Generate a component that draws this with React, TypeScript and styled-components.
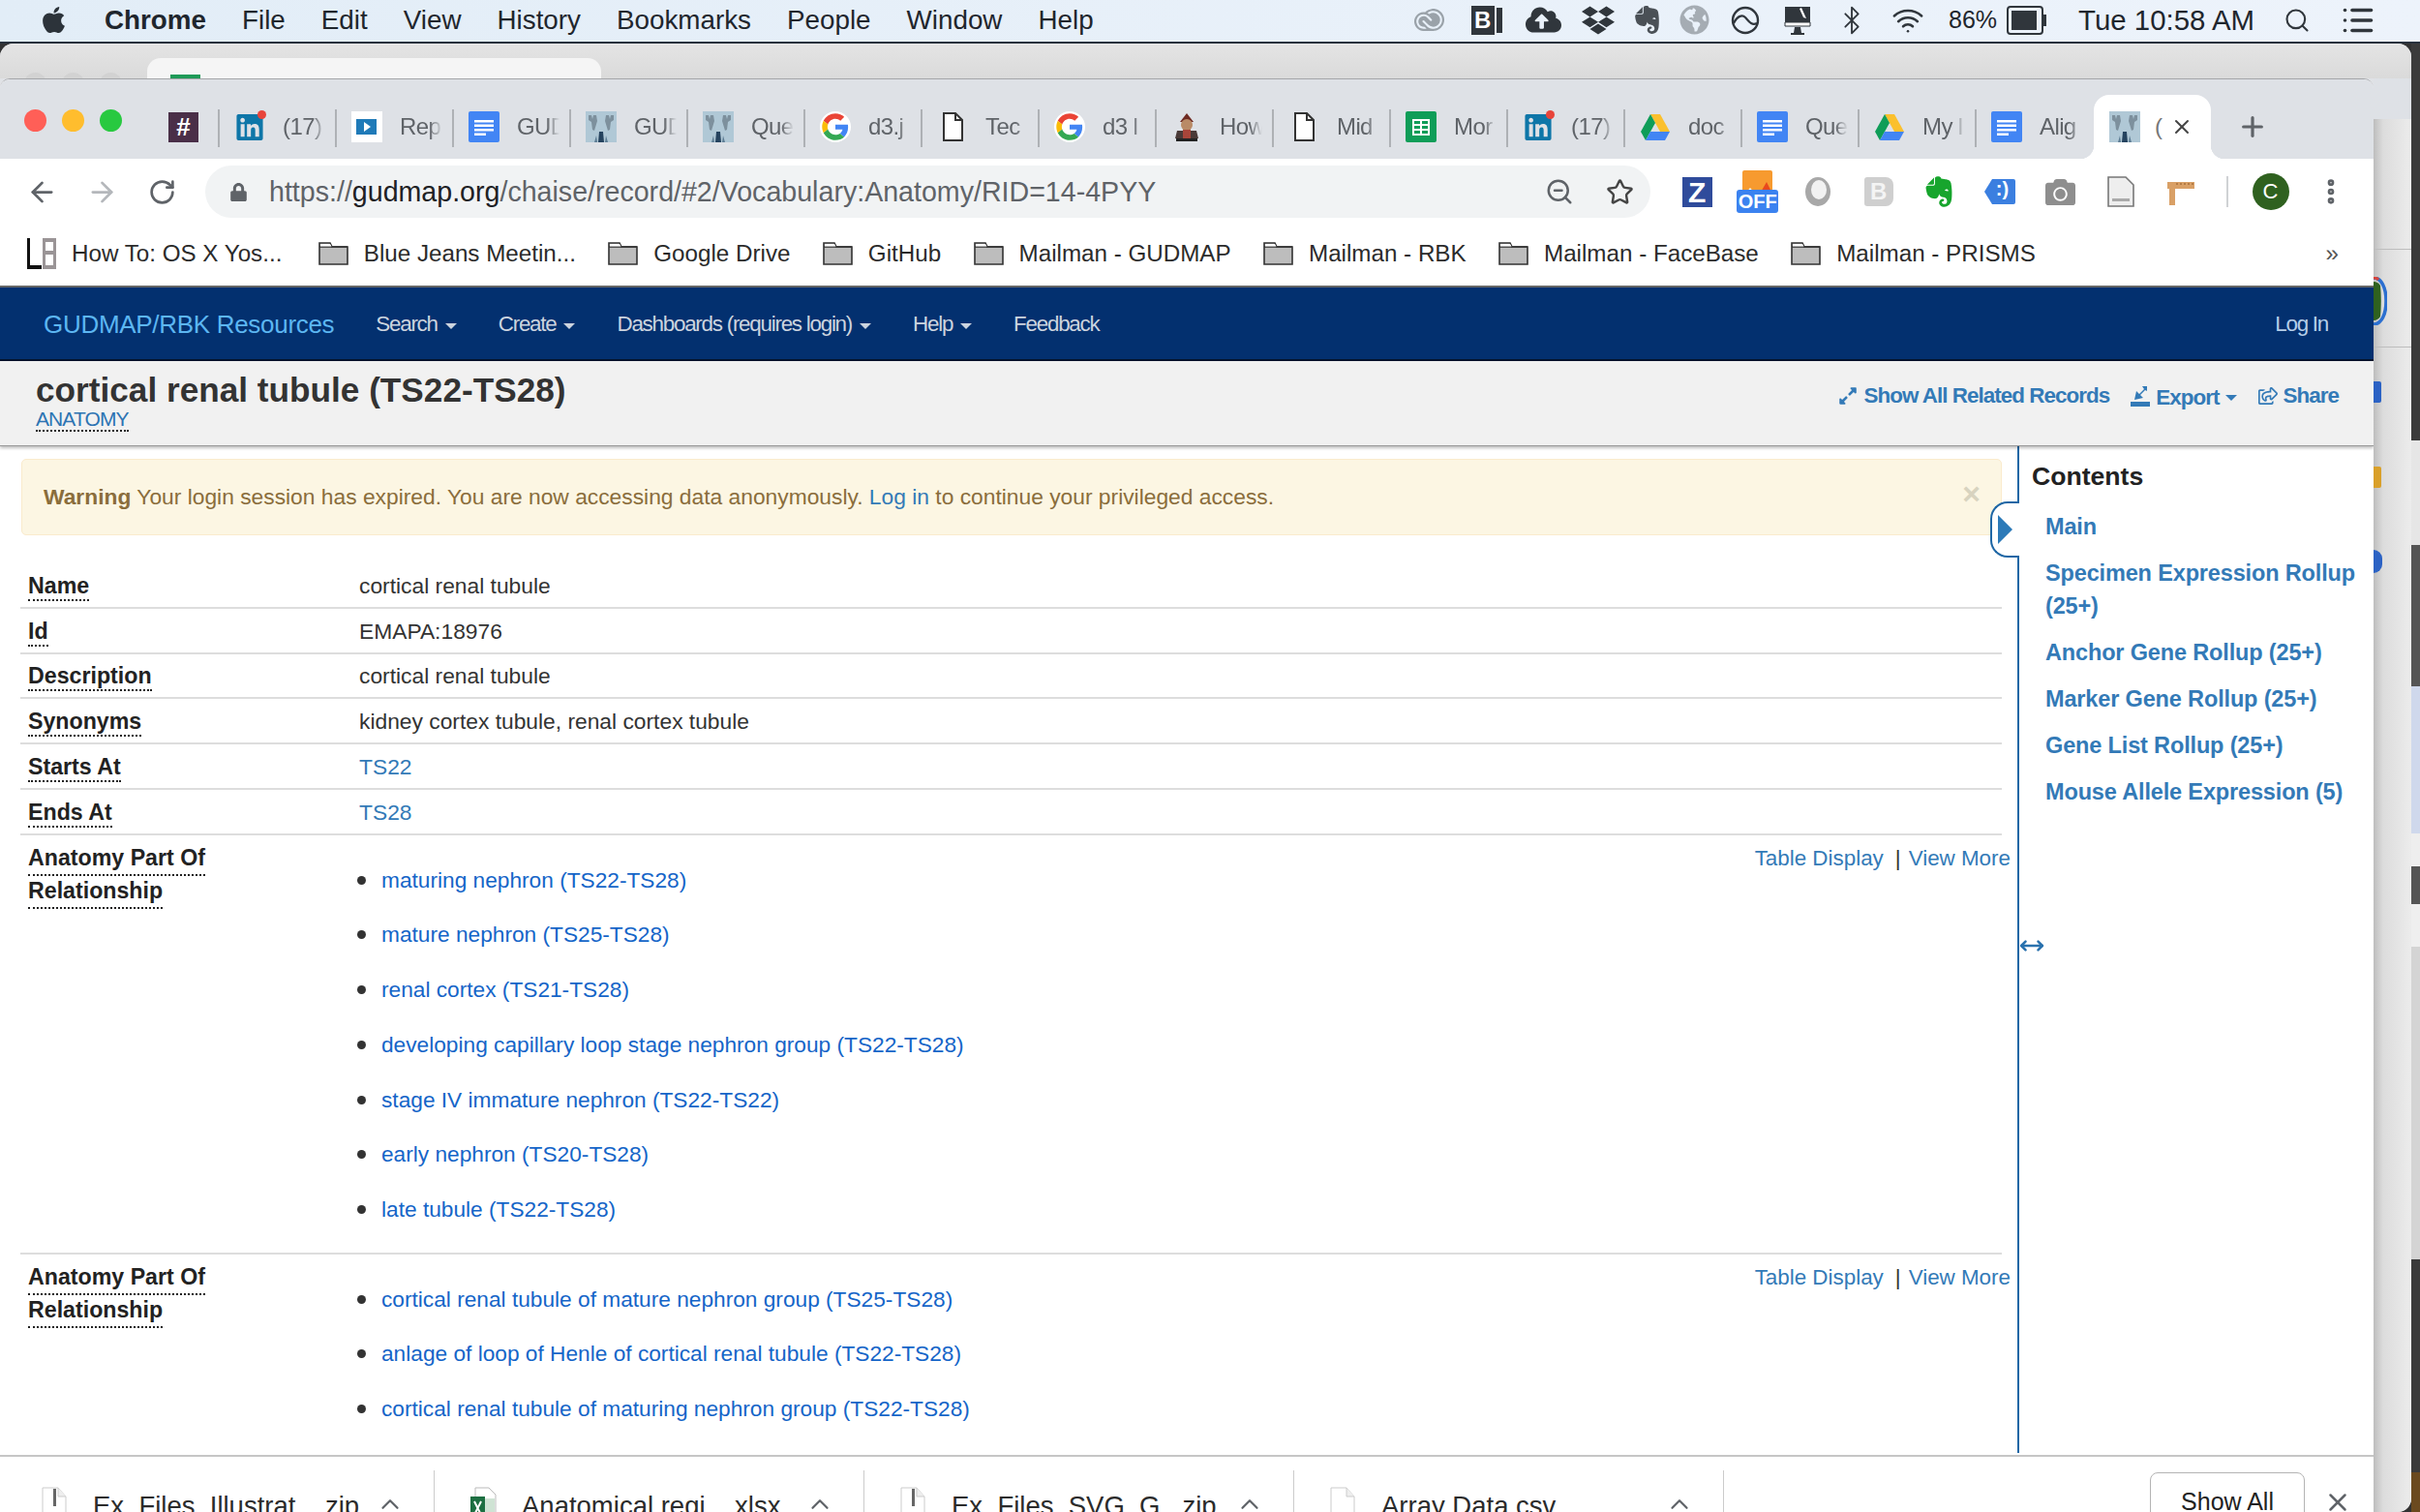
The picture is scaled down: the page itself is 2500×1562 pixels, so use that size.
import React from "react";
import styled, { createGlobalStyle } from "styled-components";
import {
  ArrowLeft,
  ArrowRight,
  Bluetooth,
  ChevronUp,
  EllipsisVertical,
  List,
  MoveHorizontal,
  Plus,
  RotateCw,
  Search,
  Star,
  Wifi,
  X,
  ZoomOut,
} from "lucide-react";
import {
  FaApple,
  FaCamera,
  FaCloudUploadAlt,
  FaDropbox,
  FaEvernote,
  FaExpandAlt,
  FaGlobeAmericas,
  FaLinkedin,
  FaLock,
  FaRegShareSquare,
} from "react-icons/fa";
import { SiAdobecreativecloud } from "react-icons/si";

const GlobalStyle = createGlobalStyle`
  html, body {
    margin: 0;
    padding: 0;
    overflow: hidden;
    background: #333;
  }
  * {
    box-sizing: border-box;
  }
  body {
    font-family: "Liberation Sans", Arial, sans-serif;
  }
`;

const SlackIcon = () => (
  <SlackBox>#</SlackBox>
);

const LinkedInIcon = () => (
  <LinkedInBox>
    <FaLinkedin size={31} color="#0e76a8" />
    <RedDot />
  </LinkedInBox>
);

const RepIcon = () => (
  <svg width="32" height="32" viewBox="0 0 32 32">
    <rect width="32" height="32" fill="#fff" />
    <rect x="5" y="8" width="21" height="16" fill="#1f7ab8" />
    <path d="M13 11l7 5-7 5z" fill="#fff" />
  </svg>
);

const DocsIcon = () => (
  <svg width="32" height="32" viewBox="0 0 32 32">
    <rect width="32" height="32" rx="2" fill="#4285f4" />
    <path d="M6 9h20v2.4H6zM6 13.5h20v2.4H6zM6 18h20v2.4H6zM6 22.5h12v2.4H6z" fill="#fff" />
  </svg>
);

const AnatomyIcon = () => (
  <svg width="32" height="32" viewBox="0 0 32 32">
    <rect width="32" height="32" fill="#b0c8d6" />
    <path d="M3 4h3l1 4 1-4h3l1 6-3 10-2-1-1-8-3-2zM29 4h-3l-1 4-1-4h-3l-1 6 3 10 2-1 1-8 3-2z" fill="#7d909d" />
    <path d="M13 32l1-11h4l1 11z" fill="#25435f" />
    <path d="M9 32l2-7 1 7zM23 32l-2-7-1 7z" fill="#5d7d94" />
  </svg>
);

const GoogleIcon = () => (
  <svg width="32" height="32" viewBox="-4 -4 56 56">
    <circle cx="24" cy="24" r="28" fill="#fff" />
    <path fill="#EA4335" d="M24 9.5c3.54 0 6.71 1.22 9.21 3.6l6.85-6.85C35.9 2.38 30.47 0 24 0 14.62 0 6.51 5.38 2.56 13.22l7.98 6.19C12.43 13.72 17.74 9.5 24 9.5z" />
    <path fill="#4285F4" d="M46.98 24.55c0-1.57-.15-3.09-.38-4.55H24v9.02h12.94c-.58 2.96-2.26 5.48-4.78 7.18l7.73 6c4.51-4.18 7.09-10.36 7.09-17.65z" />
    <path fill="#FBBC05" d="M10.53 28.59c-.48-1.45-.76-2.99-.76-4.59s.27-3.14.76-4.59l-7.98-6.19C.92 16.46 0 20.12 0 24c0 3.88.92 7.54 2.56 10.78l7.97-6.19z" />
    <path fill="#34A853" d="M24 48c6.48 0 11.93-2.13 15.89-5.81l-7.73-6c-2.15 1.45-4.92 2.3-8.16 2.3-6.26 0-11.57-4.22-13.47-9.91l-7.98 6.19C6.51 42.62 14.62 48 24 48z" />
  </svg>
);

const PageIcon = () => (
  <svg width="32" height="32" viewBox="0 0 32 32">
    <path d="M7 2h12l7 7v21H7z" fill="#fff" stroke="#333" strokeWidth="2" />
    <path d="M19 2v7h7" fill="none" stroke="#333" strokeWidth="2" />
  </svg>
);

const PirateIcon = () => (
  <svg width="32" height="32" viewBox="0 0 32 32">
    <path d="M9 11l7-9 7 9z" fill="#6e2a22" />
    <circle cx="16" cy="14" r="6" fill="#b98a66" />
    <path d="M6 20h20l2 8H4z" fill="#4a3a38" />
    <path d="M12 19h8v9h-8z" fill="#a8453a" />
    <path d="M5 28h22v3H5z" fill="#222" />
  </svg>
);

const SheetsIcon = () => (
  <svg width="32" height="32" viewBox="0 0 32 32">
    <rect width="32" height="32" rx="2" fill="#0f9d58" />
    <path d="M7 8h18v17H7z" fill="#fff" />
    <path d="M9 10h6v3H9zM17 10h6v3h-6zM9 15h6v3H9zM17 15h6v3h-6zM9 20h6v3H9zM17 20h6v3h-6z" fill="#0f9d58" />
  </svg>
);

const DriveIcon = () => (
  <svg width="32" height="32" viewBox="0 0 32 32">
    <path d="M11 3h10l10 18H21z" fill="#fbc02d" />
    <path d="M11 3l5 9-10 18-5-9z" fill="#0f9d58" />
    <path d="M11 21h20l-5 9H6z" fill="#4285f4" />
  </svg>
);

const tabs = [
  { icon: <LinkedInIcon />, label: "(17)" },
  { icon: <RepIcon />, label: "Rep" },
  { icon: <DocsIcon />, label: "GUD" },
  { icon: <AnatomyIcon />, label: "GUD" },
  { icon: <AnatomyIcon />, label: "Que" },
  { icon: <GoogleIcon />, label: "d3.j" },
  { icon: <PageIcon />, label: "Tec" },
  { icon: <GoogleIcon />, label: "d3 l" },
  { icon: <PirateIcon />, label: "How" },
  { icon: <PageIcon />, label: "Mid" },
  { icon: <SheetsIcon />, label: "Mor" },
  { icon: <LinkedInIcon />, label: "(17)" },
  { icon: <DriveIcon />, label: "doc" },
  { icon: <DocsIcon />, label: "Que" },
  { icon: <DriveIcon />, label: "My l" },
  { icon: <DocsIcon />, label: "Alig" },
];

const bookmarks = [
  "Google Drive",
  "GitHub",
  "Mailman - GUDMAP",
  "Mailman - RBK",
  "Mailman - FaceBase",
  "Mailman - PRISMS",
];

const fields = [
  { name: "Name", value: "cortical renal tubule" },
  { name: "Id", value: "EMAPA:18976" },
  { name: "Description", value: "cortical renal tubule" },
  { name: "Synonyms", value: "kidney cortex tubule, renal cortex tubule" },
  { name: "Starts At", value: "TS22", link: true },
  { name: "Ends At", value: "TS28", link: true },
];

const partOf = [
  "maturing nephron (TS22-TS28)",
  "mature nephron (TS25-TS28)",
  "renal cortex (TS21-TS28)",
  "developing capillary loop stage nephron group (TS22-TS28)",
  "stage IV immature nephron (TS22-TS22)",
  "early nephron (TS20-TS28)",
  "late tubule (TS22-TS28)",
];

const parts = [
  "cortical renal tubule of mature nephron group (TS25-TS28)",
  "anlage of loop of Henle of cortical renal tubule (TS22-TS28)",
  "cortical renal tubule of maturing nephron group (TS22-TS28)",
];

const contents = [
  "Main",
  "Specimen Expression Rollup (25+)",
  "Anchor Gene Rollup (25+)",
  "Marker Gene Rollup (25+)",
  "Gene List Rollup (25+)",
  "Mouse Allele Expression (5)",
];

const FileIcon = ({ excel }: { excel?: boolean }) =>
  excel ? (
    <svg width="28" height="46" viewBox="0 0 28 46">
      <path d="M6 1h14l7 7v36H6z" fill="#fff" stroke="#bbb" />
      <path d="M12 12h14v26H12z" fill="#cfe3d4" />
      <path d="M1 10h15v24H1z" fill="#1d6f42" />
      <path d="M5 15l7 14M12 15L5 29" stroke="#fff" strokeWidth="2" />
    </svg>
  ) : (
    <svg width="28" height="46" viewBox="0 0 28 46">
      <path d="M2 1h16l8 9v34H2z" fill="#fff" stroke="#ccc" />
      <path d="M18 1v9h8" fill="#eee" stroke="#ccc" />
      <path d="M13 2h3v18h-3z" fill="#666" />
    </svg>
  );

const downloads = [
  { name: "Ex_Files_Illustrat....zip" },
  { name: "Anatomical regi....xlsx", excel: true },
  { name: "Ex_Files_SVG_G...zip" },
  { name: "Array Data.csv", blank: true },
];

const FolderIcon = () => (
  <svg width="31" height="24" viewBox="0 0 31 24">
    <path d="M1 1h11l2 4h16v18H1z" fill="#bdbdbd" stroke="#333" strokeWidth="1.6" />
    <path d="M1 5h29" stroke="#333" strokeWidth="1.6" />
    <path d="M2 2h10l1.5 2.5H2z" fill="#fff" />
  </svg>
);

const App = () => {
  return (
    <Screen>
      <GlobalStyle />
      <MenuBar>
        <FaApple size={31} color="#2c333a" />
        <AppName>Chrome</AppName>
        {["File", "Edit", "View", "History", "Bookmarks", "People", "Window", "Help"].map((m) => (
          <MenuItem key={m}>{m}</MenuItem>
        ))}
        <StatusArea>
          <StatusSlot $w={59}><SiAdobecreativecloud size={31} color="#9aa2a9" /></StatusSlot>
          <StatusSlot $w={59}><MeetBadge>B</MeetBadge><MeetNotch /></StatusSlot>
          <StatusSlot $w={59}><FaCloudUploadAlt size={37} color="#30363c" /></StatusSlot>
          <StatusSlot $w={53}><FaDropbox size={34} color="#30363c" /></StatusSlot>
          <StatusSlot $w={48}><FaEvernote size={33} color="#4a5056" /></StatusSlot>
          <StatusSlot $w={51}><FaGlobeAmericas size={31} color="#a5acb3" /></StatusSlot>
          <StatusSlot $w={53}>
            <svg width="30" height="30" viewBox="0 0 30 30">
              <circle cx="15" cy="15" r="13" fill="none" stroke="#30363c" strokeWidth="2.4" />
              <path d="M3 18c4-8 9-9 12-6s6 9 12 6" fill="none" stroke="#30363c" strokeWidth="2.2" />
            </svg>
          </StatusSlot>
          <StatusSlot $w={55}>
            <svg width="32" height="32" viewBox="0 0 32 32">
              <path d="M3 2h26v20H3z" fill="#30363c" />
              <path d="M3 18h26v4H3z" fill="#fff" stroke="#30363c" />
              <path d="M20 3l5 11-3-1-4-9z" fill="#fff" />
              <path d="M13 23h6l1 6h3v2H9v-2h3z" fill="#30363c" />
            </svg>
          </StatusSlot>
          <StatusSlot $w={58}><Bluetooth size={32} color="#30363c" strokeWidth={1.4} /></StatusSlot>
          <StatusSlot $w={57}><Wifi size={34} color="#30363c" strokeWidth={1.8} /></StatusSlot>
          <StatusText $ml={14}>86%</StatusText>
          <BatteryBody><BatteryFill /></BatteryBody>
          <BatteryCap />
          <TimeText>Tue 10:58 AM</TimeText>
          <StatusSlot $w={50} $ml={19}><Search size={28} color="#30363c" strokeWidth={1.8} /></StatusSlot>
          <StatusSlot $w={42} $ml={17}><List size={36} color="#30363c" strokeWidth={2.4} /></StatusSlot>
        </StatusArea>
      </MenuBar>

      <Desktop>
        <BackWindow>
          <BackTop>
            <BackDots>
              <BackDot />
              <BackDot />
              <BackDot />
            </BackDots>
            <BackTab>
              <BackFavicon />
            </BackTab>
          </BackTop>
          <BackRow>
            <FrontWindow>
              <TabStrip>
                <Lights>
                  <Light $color="#ff5f57" />
                  <Light $color="#ffbd2e" />
                  <Light $color="#28c940" />
                </Lights>
                <PinnedTab>
                  <SlackIcon />
                </PinnedTab>
                {tabs.map((t, i) => (
                  <Tab key={i} $plain={i === tabs.length - 1}>
                    <TabIcon>{t.icon}</TabIcon>
                    <TabLabel>{t.label}</TabLabel>
                  </Tab>
                ))}
                <ActiveTab>
                  <TabIcon>
                    <AnatomyIcon />
                  </TabIcon>
                  <ActiveLabel>(</ActiveLabel>
                  <X size={24} color="#444" strokeWidth={2} />
                </ActiveTab>
                <NewTab>
                  <Plus size={32} color="#5f6368" strokeWidth={2.4} />
                </NewTab>
              </TabStrip>

              <Toolbar>
                <NavSlot><ArrowLeft size={33} color="#5f6368" strokeWidth={2} /></NavSlot>
                <NavSlot><ArrowRight size={33} color="#b4b7bb" strokeWidth={2} /></NavSlot>
                <NavSlot><RotateCw size={29} color="#5f6368" strokeWidth={2.2} /></NavSlot>
                <Omnibox>
                  <FaLock size={19} color="#5f6368" />
                  <UrlText>
                    https://<UrlHost>gudmap.org</UrlHost>/chaise/record/#2/Vocabulary:Anatomy/RID=14-4PYY
                  </UrlText>
                  <OmniIcons>
                    <ZoomOut size={30} color="#5f6368" strokeWidth={2} />
                    <Star size={29} color="#444" strokeWidth={2} />
                  </OmniIcons>
                </Omnibox>
                <Extensions>
                  <ExtSlot><ZoomBox>Z</ZoomBox></ExtSlot>
                  <ExtSlot>
                    <OffStack>
                      <svg width="31" height="24" viewBox="0 0 31 24">
                        <path d="M0 2q0-2 2-2h27q2 0 2 2v22H0z" fill="#f79a2f" />
                        <path d="M18 24l7-12 6 12z" fill="#e8491d" />
                        <path d="M3 24l5-6 5 6z" fill="#fff" />
                      </svg>
                      <OffBadge>OFF</OffBadge>
                    </OffStack>
                  </ExtSlot>
                  <ExtSlot>
                    <svg width="28" height="34" viewBox="0 0 28 34">
                      <ellipse cx="14" cy="17" rx="13" ry="15" fill="#a8a8a8" />
                      <ellipse cx="15" cy="15" rx="8" ry="10" fill="#f2f2f2" />
                    </svg>
                  </ExtSlot>
                  <ExtSlot>
                    <MeetGhost>B</MeetGhost>
                  </ExtSlot>
                  <ExtSlot><FaEvernote size={36} color="#17a52d" /></ExtSlot>
                  <ExtSlot>
                    <TagIcon>
                      <svg width="32" height="30" viewBox="0 0 32 30">
                        <path d="M8 2h22a2 2 0 0 1 2 2v22a2 2 0 0 1-2 2H8l-8-13z" fill="#3b7fe0" />
                      </svg>
                      <TagFace>:)</TagFace>
                    </TagIcon>
                  </ExtSlot>
                  <ExtSlot><FaCamera size={31} color="#8e8e8e" /></ExtSlot>
                  <ExtSlot>
                    <svg width="28" height="32" viewBox="0 0 28 32">
                      <path d="M1 1h18l8 8v22H1z" fill="#eee" stroke="#777" strokeWidth="1.6" />
                      <path d="M5 23h18v3H5z" fill="#aaa" />
                    </svg>
                  </ExtSlot>
                  <ExtSlot>
                    <svg width="28" height="30" viewBox="0 0 28 30">
                      <path d="M0 5h28v7H8v17H2V12H0z" fill="#d9a066" />
                      <path d="M9 7h18" stroke="#a8703c" strokeWidth="1.4" strokeDasharray="2 2" />
                    </svg>
                  </ExtSlot>
                </Extensions>
                <ToolbarDivider />
                <Avatar>C</Avatar>
                <MenuDots><EllipsisVertical size={32} color="#5f6368" strokeWidth={3} /></MenuDots>
              </Toolbar>

              <BookmarkBar>
                <BookmarkFirst>
                  <svg width="30" height="32" viewBox="0 0 30 32">
                    <path d="M0 0h3v28h12v4H0z" fill="#111" />
                    <path d="M16 0h14v32H16zM19 4v9h8V4zM19 17v11h8V17z" fill="#9a9496" />
                  </svg>
                  How To: OS X Yos...
                </BookmarkFirst>
                <Bookmark>
                  <FolderIcon />
                  Blue Jeans Meetin...
                </Bookmark>
                {bookmarks.map((b) => (
                  <Bookmark key={b}>
                    <FolderIcon />
                    {b}
                  </Bookmark>
                ))}
                <BookmarkMore>»</BookmarkMore>
              </BookmarkBar>

              <SiteNav>
                <Brand>GUDMAP/RBK Resources</Brand>
                <NavItem>Search <Caret /></NavItem>
                <NavItem>Create <Caret /></NavItem>
                <NavItem>Dashboards (requires login) <Caret /></NavItem>
                <NavItem>Help <Caret /></NavItem>
                <NavItem>Feedback</NavItem>
                <LogIn>Log In</LogIn>
              </SiteNav>

              <TitleBar>
                <TitleBlock>
                  <Title>cortical renal tubule (TS22-TS28)</Title>
                  <TableName>ANATOMY</TableName>
                </TitleBlock>
                <TitleActions>
                  <ActionLink>
                    <FaExpandAlt size={20} />
                    Show All Related Records
                  </ActionLink>
                  <ActionLink>
                    <svg width="20" height="22" viewBox="0 0 20 22">
                      <path d="M0 17h20v5H0z" fill="#337ab7" />
                      <path d="M12 1h5v5l-2-1-5 5 3 3-9 2 2-9 3 3 5-5z" fill="#337ab7" />
                    </svg>
                    <ExportLabel>Export</ExportLabel> <Caret />
                  </ActionLink>
                  <ActionLink>
                    <FaRegShareSquare size={20} />
                    Share
                  </ActionLink>
                </TitleActions>
              </TitleBar>

              <PageBody>
                <Main>
                  <Alert>
                    <span>
                      <strong>Warning</strong> Your login session has expired. You are now accessing data
                      anonymously. <AlertLink>Log in</AlertLink> to continue your privileged access.
                    </span>
                    <AlertClose>×</AlertClose>
                  </Alert>
                  <RecordTable>
                    {fields.map((f) => (
                      <Row key={f.name}>
                        <FieldLabel><Dotted>{f.name}</Dotted></FieldLabel>
                        {f.link ? <ValueLink>{f.value}</ValueLink> : <Value>{f.value}</Value>}
                      </Row>
                    ))}
                    <ListRow>
                      <LabelStack>
                        <Dotted>Anatomy Part Of</Dotted>
                        <Dotted>Relationship</Dotted>
                      </LabelStack>
                      <RelatedList>
                        {partOf.map((p) => (
                          <RelatedItem key={p}>{p}</RelatedItem>
                        ))}
                      </RelatedList>
                      <RowActions>
                        <RowLink>Table Display</RowLink>
                        <Pipe>|</Pipe>
                        <RowLink>View More</RowLink>
                      </RowActions>
                    </ListRow>
                    <ListRow>
                      <LabelStack>
                        <Dotted>Anatomy Part Of</Dotted>
                        <Dotted>Relationship</Dotted>
                      </LabelStack>
                      <RelatedList>
                        {parts.map((p) => (
                          <RelatedItem key={p}>{p}</RelatedItem>
                        ))}
                      </RelatedList>
                      <RowActions>
                        <RowLink>Table Display</RowLink>
                        <Pipe>|</Pipe>
                        <RowLink>View More</RowLink>
                      </RowActions>
                    </ListRow>
                  </RecordTable>
                  <SideHandle>
                    <HandleArrow />
                  </SideHandle>
                </Main>
                <Side>
                  <SideTitle>Contents</SideTitle>
                  <SideLinks>
                    {contents.map((c) => (
                      <SideLink key={c}>{c}</SideLink>
                    ))}
                  </SideLinks>
                  <ResizeMark>
                    <MoveHorizontal size={26} color="#2a72ae" strokeWidth={2.4} />
                  </ResizeMark>
                </Side>
              </PageBody>

              <DownloadBar>
                {downloads.map((d) => (
                  <DownloadItem key={d.name}>
                    <DownloadIcon>
                      {d.blank ? (
                        <svg width="28" height="46" viewBox="0 0 28 46">
                          <path d="M2 1h16l8 9v34H2z" fill="#fff" stroke="#ccc" />
                          <path d="M18 1v9h8" fill="#eee" stroke="#ccc" />
                        </svg>
                      ) : (
                        <FileIcon excel={d.excel} />
                      )}
                    </DownloadIcon>
                    <DownloadName>{d.name}</DownloadName>
                    <DownloadCaret>
                      <ChevronUp size={30} color="#5f6368" strokeWidth={1.8} />
                    </DownloadCaret>
                  </DownloadItem>
                ))}
                <ShowAll>Show All</ShowAll>
                <DownloadClose>
                  <X size={30} color="#5f6368" strokeWidth={2} />
                </DownloadClose>
              </DownloadBar>
            </FrontWindow>

            <BackEdge>
              <EdgeBand $h={42} $top />
              <EdgeBand $h={135} />
              <EdgeBand $h={101} />
              <EdgeRing>
                <svg width="14" height="50" viewBox="0 0 14 50">
                  <path d="M0 5c3 0 6 2 7 4 1 10 1 22 0 32-1 2-4 4-7 4z" fill="#2f611f" />
                  <path d="M0 1c8 0 13 10 13 24S8 49 0 49" fill="none" stroke="#2b6fd0" strokeWidth="3.5" />
                  <path d="M0 1c2 0 4 .7 5 2" fill="none" stroke="#d9443a" strokeWidth="3" />
                </svg>
              </EdgeRing>
              <EdgeBit $top={313} $color="#2b62c4" $w={8} $h={22} />
              <EdgeBit $top={401} $color="#d9a02a" $w={8} $h={22} />
              <EdgeBit $top={487} $color="#2b62c4" $w={9} $h={24} $round />
            </BackEdge>
          </BackRow>
        </BackWindow>

        <DarkStrip>
          <DarkPart $h={410} $color="#3b3b3b" />
          <DarkPart $h={108} $color="#e6e6e6" />
          <DarkPart $h={146} $color="#555" />
          <DarkPart $h={152} $color="#cfd8ec" />
          <DarkPart $h={34} $color="#eee" />
          <DarkPart $h={39} $color="#555" />
          <DarkPart $h={44} $color="#efefef" />
          <DarkPart $h={323} $color="#d4d4d4" />
          <DarkPart $h={220} $color="#3b3b3b" />
          <DarkPart $h={41} $color="#6b4a1f" />
        </DarkStrip>
      </Desktop>
    </Screen>
  );
};

const Screen = styled.div`
  width: 2500px;
  height: 1562px;
  display: flex;
  flex-direction: column;
  overflow: hidden;
  color: #333;
`;

const MenuBar = styled.div`
  height: 45px;
  flex: none;
  display: flex;
  align-items: center;
  padding: 0 43px 2px 40px;
  gap: 37px;
  background: linear-gradient(90deg, #e2edf7, #edf3fb);
  border-bottom: 2px solid #28313c;
  font-size: 27.8px;
  color: #1f262d;
`;

const AppName = styled.span`
  font-weight: 700;
`;

const MenuItem = styled.span``;

const StatusArea = styled.div`
  margin-left: auto;
  display: flex;
  align-items: center;
`;

const StatusSlot = styled.span<{ $w: number; $ml?: number }>`
  width: ${(p) => p.$w}px;
  margin-left: ${(p) => p.$ml || 0}px;
  display: flex;
  align-items: center;
  justify-content: center;
`;

const StatusText = styled.span<{ $ml: number }>`
  margin-left: ${(p) => p.$ml}px;
  font-size: 25px;
`;

const TimeText = styled(StatusText).attrs({ $ml: 33 })`
  font-size: 29.4px;
  white-space: nowrap;
`;

const MeetBadge = styled.span`
  width: 24px;
  height: 30px;
  background: #30363c;
  color: #fff;
  font-size: 24px;
  font-weight: 700;
  text-align: center;
  line-height: 30px;
`;

const MeetNotch = styled.span`
  width: 6px;
  height: 26px;
  margin-left: 2px;
  background: #30363c;
`;

const BatteryBody = styled.span`
  width: 38px;
  height: 30px;
  margin-left: 10px;
  padding: 3px;
  border: 2px solid #30363c;
  border-radius: 4px;
`;

const BatteryFill = styled.span`
  display: block;
  width: 26px;
  height: 100%;
  background: #30363c;
`;

const BatteryCap = styled.span`
  width: 3px;
  height: 12px;
  background: #30363c;
`;

const Desktop = styled.div`
  flex: 1;
  min-height: 0;
  display: flex;
`;

const BackWindow = styled.div`
  width: 2491px;
  flex: none;
  display: flex;
  flex-direction: column;
  border-radius: 14px 14px 14px 0;
  overflow: hidden;
  background: #e0e2e6;
`;

const BackTop = styled.div`
  height: 36px;
  flex: none;
  display: flex;
  align-items: flex-end;
  overflow: hidden;
  background: linear-gradient(#e4e4e4, #dadada);
`;

const BackDots = styled.div`
  width: 152px;
  flex: none;
  display: flex;
  gap: 16px;
  padding-left: 25px;
  margin-bottom: -17px;
`;

const BackDot = styled.span`
  width: 23px;
  height: 23px;
  border-radius: 50%;
  background: #d2d2d2;
`;

const BackTab = styled.div`
  width: 469px;
  height: 21px;
  border-radius: 14px 14px 0 0;
  background: #f5f5f5;
  display: flex;
  align-items: flex-end;
  padding-left: 24px;
`;

const BackFavicon = styled.span`
  width: 31px;
  height: 4px;
  background: #1e9a57;
`;

const BackRow = styled.div`
  flex: 1;
  min-height: 0;
  display: flex;
`;

const FrontWindow = styled.div`
  width: 2452px;
  flex: none;
  display: flex;
  flex-direction: column;
  background: #fff;
  border-top: 1px solid #a4a6a9;
  border-radius: 10px 10px 0 0;
  overflow: hidden;
`;

const TabStrip = styled.div`
  height: 82px;
  flex: none;
  display: flex;
  align-items: flex-end;
  background: #dee1e6;
`;

const Lights = styled.div`
  width: 153px;
  height: 100%;
  flex: none;
  display: flex;
  gap: 16px;
  padding: 31px 0 0 25px;
`;

const Light = styled.span<{ $color: string }>`
  width: 23px;
  height: 23px;
  border-radius: 50%;
  background: ${(p) => p.$color};
`;

const Tab = styled.div<{ $plain?: boolean }>`
  position: relative;
  width: 121px;
  height: 66px;
  flex: none;
  display: flex;
  align-items: center;
  padding-left: 15px;
  ${(p) =>
    !p.$plain &&
    `&::after {
      content: "";
      position: absolute;
      right: 0;
      top: 15px;
      width: 2px;
      height: 39px;
      background: #aeb1b5;
    }`}
`;

const PinnedTab = styled(Tab)`
  width: 74px;
  padding-left: 21px;
`;

const TabIcon = styled.span`
  width: 32px;
  height: 32px;
  flex: none;
  display: flex;
  align-items: center;
  justify-content: center;
  position: relative;
`;

const TabLabel = styled.span`
  margin-left: 18px;
  width: 44px;
  overflow: hidden;
  white-space: nowrap;
  font-size: 24px;
  letter-spacing: -0.6px;
  color: #5f6368;
  -webkit-mask-image: linear-gradient(90deg, #000 70%, transparent);
  mask-image: linear-gradient(90deg, #000 70%, transparent);
`;

const ActiveTab = styled.div`
  position: relative;
  width: 121px;
  height: 66px;
  flex: none;
  display: flex;
  align-items: center;
  padding-left: 16px;
  background: #fff;
  border-radius: 16px 16px 0 0;

  &::before,
  &::after {
    content: "";
    position: absolute;
    bottom: 0;
    width: 14px;
    height: 14px;
  }
  &::before {
    left: -14px;
    background: radial-gradient(circle at 0 0, #dee1e6 14px, #fff 14.5px);
  }
  &::after {
    right: -14px;
    background: radial-gradient(circle at 100% 0, #dee1e6 14px, #fff 14.5px);
  }
`;

const ActiveLabel = styled.span`
  width: 12px;
  margin: 0 4px 0 15px;
  overflow: hidden;
  font-size: 24px;
  color: #777;
`;

const NewTab = styled.span`
  height: 66px;
  margin-left: 27px;
  display: flex;
  align-items: center;
`;

const SlackBox = styled.span`
  width: 31px;
  height: 31px;
  background: #4a2f48;
  color: #fff;
  font-size: 26px;
  font-weight: 700;
  line-height: 31px;
  text-align: center;
`;

const LinkedInBox = styled.span`
  position: relative;
  width: 28px;
  height: 31px;
  display: flex;
  align-items: center;
  justify-content: center;
`;

const RedDot = styled.span`
  position: absolute;
  top: -2px;
  right: -3px;
  width: 9px;
  height: 9px;
  border-radius: 50%;
  background: #e8443a;
`;

const Toolbar = styled.div`
  height: 68px;
  flex: none;
  display: flex;
  align-items: center;
  padding-left: 12px;
  background: #fff;
`;

const NavSlot = styled.span`
  width: 62px;
  flex: none;
  display: flex;
  justify-content: center;
`;

const Omnibox = styled.div`
  width: 1493px;
  height: 54px;
  margin-left: 14px;
  flex: none;
  display: flex;
  align-items: center;
  padding: 0 17px 0 25px;
  border-radius: 27px;
  background: #f1f3f4;
`;

const UrlText = styled.span`
  margin-left: 22px;
  font-size: 28.6px;
  color: #5f6368;
  white-space: nowrap;
`;

const UrlHost = styled.span`
  color: #202124;
`;

const OmniIcons = styled.span`
  margin-left: auto;
  display: flex;
  align-items: center;
  gap: 33px;
`;

const Extensions = styled.div`
  margin-left: 17px;
  display: flex;
  align-items: center;
`;

const ExtSlot = styled.span`
  width: 62.5px;
  height: 54px;
  flex: none;
  display: flex;
  align-items: center;
  justify-content: center;
`;

const ZoomBox = styled.span`
  width: 31px;
  height: 31px;
  background: #2f4b9b;
  color: #fff;
  font-size: 30px;
  font-weight: 700;
  line-height: 31px;
  text-align: center;
`;

const OffStack = styled.span`
  display: flex;
  flex-direction: column;
  align-items: center;
`;

const OffBadge = styled.span`
  width: 43px;
  height: 24px;
  margin-top: -4px;
  background: #3b82f0;
  border-radius: 3px;
  color: #fff;
  font-size: 20px;
  font-weight: 700;
  line-height: 24px;
  text-align: center;
`;

const MeetGhost = styled.span`
  width: 30px;
  height: 30px;
  background: #cfcfcf;
  border-radius: 3px 8px 8px 3px;
  color: #f4f4f4;
  font-size: 24px;
  font-weight: 700;
  line-height: 30px;
  text-align: center;
`;

const TagIcon = styled.span`
  position: relative;
  display: flex;
`;

const TagFace = styled.span`
  position: absolute;
  left: 12px;
  top: 1px;
  color: #fff;
  font-size: 20px;
  font-weight: 700;
`;

const ToolbarDivider = styled.span`
  width: 2px;
  height: 32px;
  margin-left: 15px;
  background: #d0d2d5;
`;

const Avatar = styled.span`
  width: 38px;
  height: 38px;
  margin-left: 25px;
  border-radius: 50%;
  background: #2f611f;
  color: #fff;
  font-size: 22px;
  line-height: 38px;
  text-align: center;
`;

const MenuDots = styled.span`
  margin-left: 27px;
  display: flex;
`;

const BookmarkBar = styled.div`
  height: 65px;
  flex: none;
  display: flex;
  align-items: center;
  gap: 33.4px;
  padding: 0 0 4px 28px;
  background: #fff;
  border-bottom: 2px solid #666;
  font-size: 24.2px;
  color: #2b2b2b;
`;

const Bookmark = styled.span`
  display: flex;
  align-items: center;
  gap: 16px;
  white-space: nowrap;
`;

const BookmarkFirst = styled(Bookmark)`
  margin-right: 4px;
`;

const BookmarkMore = styled.span`
  margin-left: auto;
  padding-right: 36px;
  color: #555;
`;

const SiteNav = styled.div`
  height: 76px;
  flex: none;
  display: flex;
  align-items: center;
  gap: 43px;
  padding: 2px 47px 0 45px;
  background: #03306f;
  border-bottom: 2px solid #02122c;
  font-size: 22.4px;
  letter-spacing: -1.25px;
  color: #ccd4df;
`;

const Brand = styled.span`
  color: #5cb6f2;
  font-size: 26px;
  letter-spacing: -0.3px;
`;

const NavItem = styled.span`
  display: flex;
  align-items: center;
  gap: 8px;
  white-space: nowrap;
`;

const Caret = styled.span`
  width: 0;
  height: 0;
  margin-top: 3px;
  border-left: 6px solid transparent;
  border-right: 6px solid transparent;
  border-top: 6px solid currentColor;
`;

const LogIn = styled.span`
  margin-left: auto;
  color: #b5cee8;
`;

const TitleBar = styled.div`
  height: 88px;
  flex: none;
  display: flex;
  justify-content: space-between;
  padding: 12px 36px 0 37px;
  background: #f1f1f1;
  border-bottom: 1px solid #999;
  box-shadow: 0 2px 3px rgba(0, 0, 0, 0.25);
  position: relative;
  z-index: 2;
`;

const TitleBlock = styled.div`
  display: flex;
  flex-direction: column;
  align-items: flex-start;
`;

const Title = styled.h1`
  margin: 0;
  font-size: 35.2px;
  line-height: 36px;
  font-weight: 700;
  color: #333;
`;

const TableName = styled.span`
  font-size: 21px;
  line-height: 23px;
  letter-spacing: -0.9px;
  color: #2d74b3;
  border-bottom: 2px dotted #222;
`;

const TitleActions = styled.div`
  display: flex;
  align-items: center;
  gap: 22px;
  height: 48px;
`;

const ActionLink = styled.span`
  display: flex;
  align-items: center;
  gap: 6px;
  font-size: 22.4px;
  font-weight: 700;
  letter-spacing: -0.95px;
  color: #337ab7;
`;

const ExportLabel = styled.span`
  margin-top: 4px;
`;

const PageBody = styled.div`
  flex: 1;
  min-height: 0;
  display: flex;
  overflow: hidden;
`;

const Main = styled.div`
  position: relative;
  width: 2086px;
  flex: none;
  padding: 13px 16px 0 22px;
  border-right: 2px solid #1f67a5;
  background: #fff;
  margin-bottom: 2px;
`;

const Alert = styled.div`
  height: 79px;
  display: flex;
  align-items: center;
  justify-content: space-between;
  padding: 0 22px;
  background: #fcf6e3;
  border: 1px solid #faebcc;
  border-radius: 5px;
  font-size: 22.8px;
  color: #8a6d3b;
`;

const AlertLink = styled.span`
  color: #337ab7;
`;

const AlertClose = styled.span`
  font-size: 32px;
  font-weight: 700;
  color: #d8d3bf;
  margin-top: -6px;
  margin-right: -1px;
`;

const RecordTable = styled.div`
  margin: 29px 0 0 -1px;
`;

const Row = styled.div`
  height: 46.8px;
  display: grid;
  grid-template-columns: 342px 1fr;
  align-items: center;
  padding: 2px 0 0 8px;
  border-bottom: 2px solid #ddd;
  font-size: 22.8px;
`;

const FieldLabel = styled.span``;

const Dotted = styled.span`
  font-size: 23.2px;
  font-weight: 700;
  color: #222;
  border-bottom: 2px dotted #222;
  padding-bottom: 1px;
`;

const Value = styled.span`
  color: #333;
`;

const ValueLink = styled.span`
  color: #337ab7;
`;

const ListRow = styled.div`
  display: grid;
  grid-template-columns: 342px 1fr auto;
  align-items: start;
  padding: 6px 0 0 8px;
  border-bottom: 2px solid #ddd;
  font-size: 22.7px;

  &:last-child {
    border-bottom: none;
  }
`;

const LabelStack = styled.div`
  display: flex;
  flex-direction: column;
  align-items: flex-start;
  line-height: 31px;
  margin-top: 2px;
`;

const RelatedList = styled.ul`
  margin: 12px 0 16px;
  padding: 0 0 0 23px;
  list-style: none;
`;

const RelatedItem = styled.li`
  position: relative;
  height: 56.7px;
  line-height: 56.7px;
  color: #1565c8;

  &::before {
    content: "";
    position: absolute;
    left: -25px;
    top: 24px;
    width: 9px;
    height: 9px;
    border-radius: 50%;
    background: #333;
  }
`;

const RowActions = styled.div`
  display: flex;
  align-items: center;
  font-size: 22.4px;
  line-height: 33px;
  margin: 1px -9px 0 0;
`;

const RowLink = styled.span`
  color: #337ab7;
`;

const Pipe = styled.span`
  margin: 0 8px 0 12px;
`;

const SideHandle = styled.div`
  position: absolute;
  top: 57px;
  right: -2px;
  width: 30px;
  height: 58px;
  display: flex;
  align-items: center;
  padding-left: 6px;
  background: #fff;
  border: 2px solid #1f67a5;
  border-right: none;
  border-radius: 18px 0 0 18px;
`;

const HandleArrow = styled.span`
  width: 0;
  height: 0;
  border-top: 15px solid transparent;
  border-bottom: 15px solid transparent;
  border-left: 15px solid #2c7ab8;
`;

const Side = styled.div`
  position: relative;
  flex: 1;
  padding: 16px 8px 0 13px;
  background: #fff;
`;

const SideTitle = styled.div`
  font-size: 26.6px;
  line-height: 30px;
  font-weight: 700;
  color: #222;
`;

const SideLinks = styled.div`
  margin: 20px 0 0 14px;
  display: flex;
  flex-direction: column;
  gap: 14px;
`;

const SideLink = styled.span`
  font-size: 23.5px;
  line-height: 34px;
  font-weight: 700;
  letter-spacing: -0.15px;
  color: #337ab7;
`;

const ResizeMark = styled.span`
  position: absolute;
  left: 0;
  top: 503px;
  display: flex;
`;

const DownloadBar = styled.div`
  height: 59px;
  flex: none;
  display: flex;
  align-items: flex-start;
  padding-top: 14px;
  overflow: hidden;
  background: #fff;
  border-top: 2px solid #c6c6c6;
`;

const DownloadItem = styled.div`
  width: 444px;
  height: 80px;
  flex: none;
  display: flex;
  align-items: center;
  padding-left: 36px;
  border-right: 1px solid #ccc;
  font-size: 27.5px;
  color: #2b2b2b;

  &:first-child {
    width: 449px;
    padding-left: 42px;
  }
`;

const DownloadIcon = styled.span`
  width: 28px;
  height: 46px;
  flex: none;
  display: flex;
`;

const DownloadName = styled.span`
  flex: 1;
  margin: -6px 0 0 26px;
  white-space: nowrap;
`;

const DownloadCaret = styled.span`
  width: 30px;
  flex: none;
  margin: -10px 30px 0 0;
  display: flex;
`;

const ShowAll = styled.span`
  width: 160px;
  height: 60px;
  margin: 2px 0 0 440px;
  flex: none;
  display: flex;
  align-items: center;
  justify-content: center;
  border: 1px solid #b4b4b4;
  border-radius: 8px;
  font-size: 25px;
  color: #222;
`;

const DownloadClose = styled.span`
  margin: 18px 0 0 19px;
  display: flex;
`;

const BackEdge = styled.div`
  position: relative;
  flex: 1;
  background: linear-gradient(90deg, #bdbdbd, #dcdcdc 25%, #ececec);
`;

const EdgeBand = styled.div<{ $h: number; $top?: boolean }>`
  height: ${(p) => p.$h}px;
  ${(p) => (p.$top ? "background: #dee1e6;" : "border-bottom: 1px solid #bdbdbd;")}
`;

const EdgeRing = styled.span`
  position: absolute;
  top: 205px;
  left: 0;
  display: flex;
`;

const EdgeBit = styled.span<{ $top: number; $color: string; $w: number; $h: number; $round?: boolean }>`
  position: absolute;
  left: 0;
  top: ${(p) => p.$top}px;
  width: ${(p) => p.$w}px;
  height: ${(p) => p.$h}px;
  background: ${(p) => p.$color};
  border-radius: ${(p) => (p.$round ? "0 12px 12px 0" : "0 2px 2px 0")};
`;

const DarkStrip = styled.div`
  flex: 1;
  display: flex;
  flex-direction: column;
`;

const DarkPart = styled.span<{ $h: number; $color: string }>`
  height: ${(p) => p.$h}px;
  flex: none;
  background: ${(p) => p.$color};
`;

export default App;
